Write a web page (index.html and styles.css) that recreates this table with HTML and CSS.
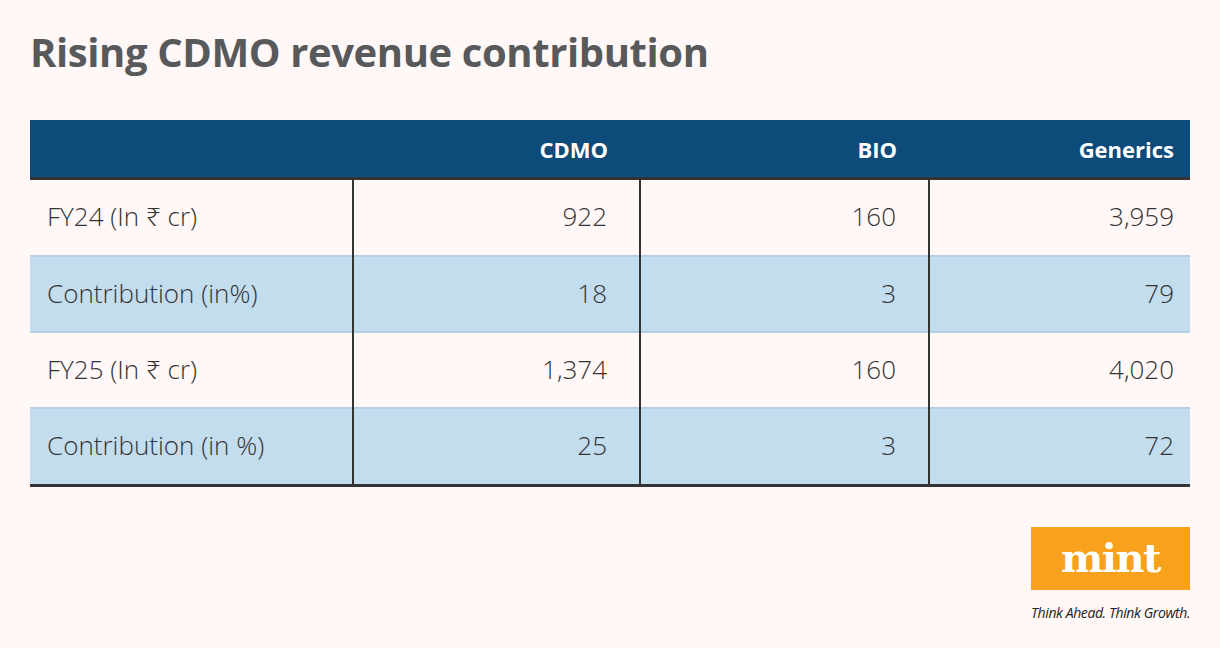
FILE: index.html
```html
<!DOCTYPE html>
<html>
<head>
<meta charset="utf-8">
<link rel="stylesheet" href="styles.css">
</head>
<body>
<div class="page">
  <h1 class="title">Rising CDMO revenue contribution</h1>
  <table class="data">
    <colgroup>
      <col class="w1">
      <col class="w2">
      <col class="w3">
      <col class="w4">
    </colgroup>
    <thead>
      <tr>
        <th class="c1"></th>
        <th class="c2">CDMO</th>
        <th class="c3">BIO</th>
        <th class="c4">Generics</th>
      </tr>
    </thead>
    <tbody>
      <tr>
        <td class="c1">FY24 (In ₹ cr)</td>
        <td class="c2">922</td>
        <td class="c3">160</td>
        <td class="c4">3,959</td>
      </tr>
      <tr class="alt">
        <td class="c1">Contribution (in%)</td>
        <td class="c2">18</td>
        <td class="c3">3</td>
        <td class="c4">79</td>
      </tr>
      <tr>
        <td class="c1">FY25 (In ₹ cr)</td>
        <td class="c2">1,374</td>
        <td class="c3">160</td>
        <td class="c4">4,020</td>
      </tr>
      <tr class="alt">
        <td class="c1">Contribution (in %)</td>
        <td class="c2">25</td>
        <td class="c3">3</td>
        <td class="c4">72</td>
      </tr>
    </tbody>
  </table>
  <div class="footer">
    <div class="brand">
      <div class="logo">mint</div>
      <div class="tagline">Think Ahead. Think Growth.</div>
    </div>
  </div>
</div>
</body>
</html>
```

FILE: styles.css
```css
html, body {
  margin: 0;
  padding: 0;
  background: #fff8f7;
}
.page {
  width: 1220px;
  height: 648px;
  box-sizing: border-box;
  padding: 30px 30px 0 30px;
  font-family: "Open Sans", "Noto Sans", sans-serif;
}
.title {
  margin: 0;
  font-size: 40px;
  line-height: 44px;
  font-weight: 700;
  color: #58595b;
  letter-spacing: -0.4px;
}
.data {
  margin-top: 46px;
  width: 1160px;
  border-collapse: collapse;
  table-layout: fixed;
}
.data col.w1 { width: 323px; }
.data col.w2 { width: 287px; }
.data col.w3 { width: 289px; }
.data col.w4 { width: 261px; }
.data th {
  background: #0d4b7b;
  color: #ffffff;
  font-weight: 700;
  font-size: 22px;
  font-stretch: 93%;
  height: 57px;
  text-align: right;
  padding: 0 32px 0 0;
  border-bottom: 3px solid #333333;
}
.data td {
  height: 71px;
  font-size: 26px;
  font-weight: 300;
  color: #333333;
  text-align: right;
  padding: 0 32px 3px 0;
  border-left: 2px solid #333333;
  border-top: 2px solid #b3d0e2;
}
.data tbody tr:first-child td { border-top: none; height: 72px; }
.data tbody tr:last-child td { border-bottom: 3px solid #333333; height: 72px; }
.data td.c1 {
  border-left: none;
  text-align: left;
  padding: 0 0 3px 17px;
}
.data th.c4, .data td.c4 { padding-right: 16px; }
.data tr.alt td { background: #c2ddee; }
.footer {
  display: flex;
  justify-content: flex-end;
  margin-top: 40px;
}
.brand {
  width: 159px;
  display: flex;
  flex-direction: column;
}
.logo {
  background: #f8a11c;
  height: 63px;
  color: #ffffff;
  font-family: "DejaVu Serif", "Liberation Serif", serif;
  font-weight: 700;
  font-size: 40px;
  line-height: 62px;
  text-align: center;
  letter-spacing: -1.5px;
}
.tagline {
  margin-top: 13px;
  font-size: 14px;
  font-style: italic;
  color: #222222;
  letter-spacing: -0.4px;
  white-space: nowrap;
}
```
